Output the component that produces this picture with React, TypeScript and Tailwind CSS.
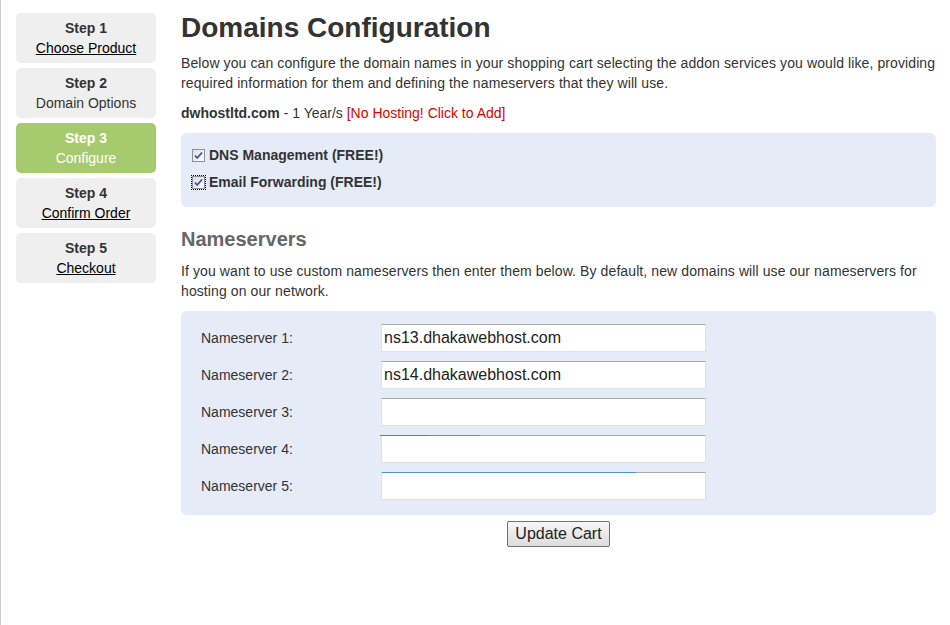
import React from "react";

function Check({ focus }: { focus?: boolean }) {
  return (
    <span className={"inline-flex items-center justify-center w-[13px] h-[13px] mr-[4px] ml-[1px] " + (focus ? "outline outline-1 outline-dotted outline-black" : "")}>
      <svg width="13" height="13" viewBox="0 0 13 13">
        <defs>
          <linearGradient id="cbg" x1="0" y1="0" x2="1" y2="1">
            <stop offset="0" stopColor="#dcdcdc" />
            <stop offset="1" stopColor="#ffffff" />
          </linearGradient>
        </defs>
        <rect x="0.5" y="0.5" width="12" height="12" fill="url(#cbg)" stroke="#8f8f9d" />
        <path d="M3 6.5 L5.2 9 L10 3.5" fill="none" stroke="#3d4f9a" strokeWidth="1.7" />
      </svg>
    </span>
  );
}

const steps = [
  { n: "Step 1", l: "Choose Product", link: true },
  { n: "Step 2", l: "Domain Options", link: false },
  { n: "Step 3", l: "Configure", active: true },
  { n: "Step 4", l: "Confirm Order", link: true },
  { n: "Step 5", l: "Checkout", link: true },
];

export default function App() {
  const ns = ["ns13.dhakawebhost.com", "ns14.dhakawebhost.com", "", "", ""];
  return (
    <div className="w-[950px] h-[625px] bg-white border-l border-[#cccccc] flex text-[#333333]" style={{ fontFamily: '"Liberation Sans", Arial, sans-serif' }}>
      <div className="w-[140px] ml-[15px] mt-[13px] flex flex-col gap-[5px]">
        {steps.map((s) => (
          <div
            key={s.n}
            className={
              "h-[50px] rounded-[5px] flex flex-col items-center justify-center text-[14px] leading-[20px] " +
              (s.active ? "bg-[#a6cb6e] text-white" : "bg-[#efefef] text-[#333333]")
            }
          >
            <div className="font-bold">{s.n}</div>
            <div className={s.link ? "underline text-black" : ""}>{s.l}</div>
          </div>
        ))}
      </div>
      <div className="ml-[25px] w-[755px]">
        <h1 className="text-[28px] font-bold leading-[32px] mt-[12px] text-[#333333]">Domains Configuration</h1>
        <p className="text-[14px] leading-[20px] mt-[9px] tracking-[0.1px]">
          Below you can configure the domain names in your shopping cart selecting the addon services you would like, providing required information for them and defining the nameservers that they will use.
        </p>
        <p className="text-[14px] leading-[20px] mt-[10px]">
          <span className="font-bold">dwhostltd.com</span> - 1 Year/s <span className="text-[#dd0000]">[No Hosting! Click to Add]</span>
        </p>
        <div className="mt-[10px] bg-[#e5ebf7] rounded-[6px] h-[74px] pl-[10px] pt-[12px] text-[14px] font-bold">
          <div className="flex items-center h-[20px]">
            <Check />
            <span>DNS Management (FREE!)</span>
          </div>
          <div className="flex items-center h-[20px] mt-[7px]">
            <Check focus />
            <span>Email Forwarding (FREE!)</span>
          </div>
        </div>
        <h2 className="text-[20px] font-bold text-[#666666] leading-[24px] mt-[20px]">Nameservers</h2>
        <p className="text-[14px] leading-[20px] mt-[10px] tracking-[0.1px]">
          If you want to use custom nameservers then enter them below. By default, new domains will use our nameservers for hosting on our network.
        </p>
        <div className="mt-[10px] bg-[#e5ebf7] rounded-[6px] h-[204px] pt-[13px] pl-[20px] flex flex-col gap-[9px]">
          {ns.map((v, i) => (
            <div key={i} className="flex items-center h-[28px]">
              <div className="w-[180px] text-[14px]">Nameserver {i + 1}:</div>
              <div className="relative">
                <input
                  readOnly
                  value={v}
                  className="w-[325px] h-[28px] bg-white border border-[#dde2ea] border-t-[#aaaaaa] px-[2px] text-[16px] text-[#222222] outline-none"
                  style={{ fontFamily: '"Liberation Sans", Arial, sans-serif' }}
                />
                {i === 3 && (
                  <div className="absolute left-[-1px] top-0 h-px w-[100px] flex">
                    <div className="w-[49px] bg-[#b06a30]" />
                    <div className="w-[51px] bg-[#4f94c8]" />
                  </div>
                )}
                {i === 4 && <div className="absolute left-[1px] top-0 h-px w-[254px] bg-[#4f94c8]" />}
              </div>
            </div>
          ))}
        </div>
        <div className="flex justify-center mt-[6px]">
          <button className="h-[26px] px-[7px] border border-[#707070] rounded-[2px] text-[16px] text-[#222222] bg-gradient-to-b from-[#f6f6f6] to-[#dddddd]" style={{ fontFamily: '"Liberation Sans", Arial, sans-serif' }}>
            Update Cart
          </button>
        </div>
      </div>
    </div>
  );
}
